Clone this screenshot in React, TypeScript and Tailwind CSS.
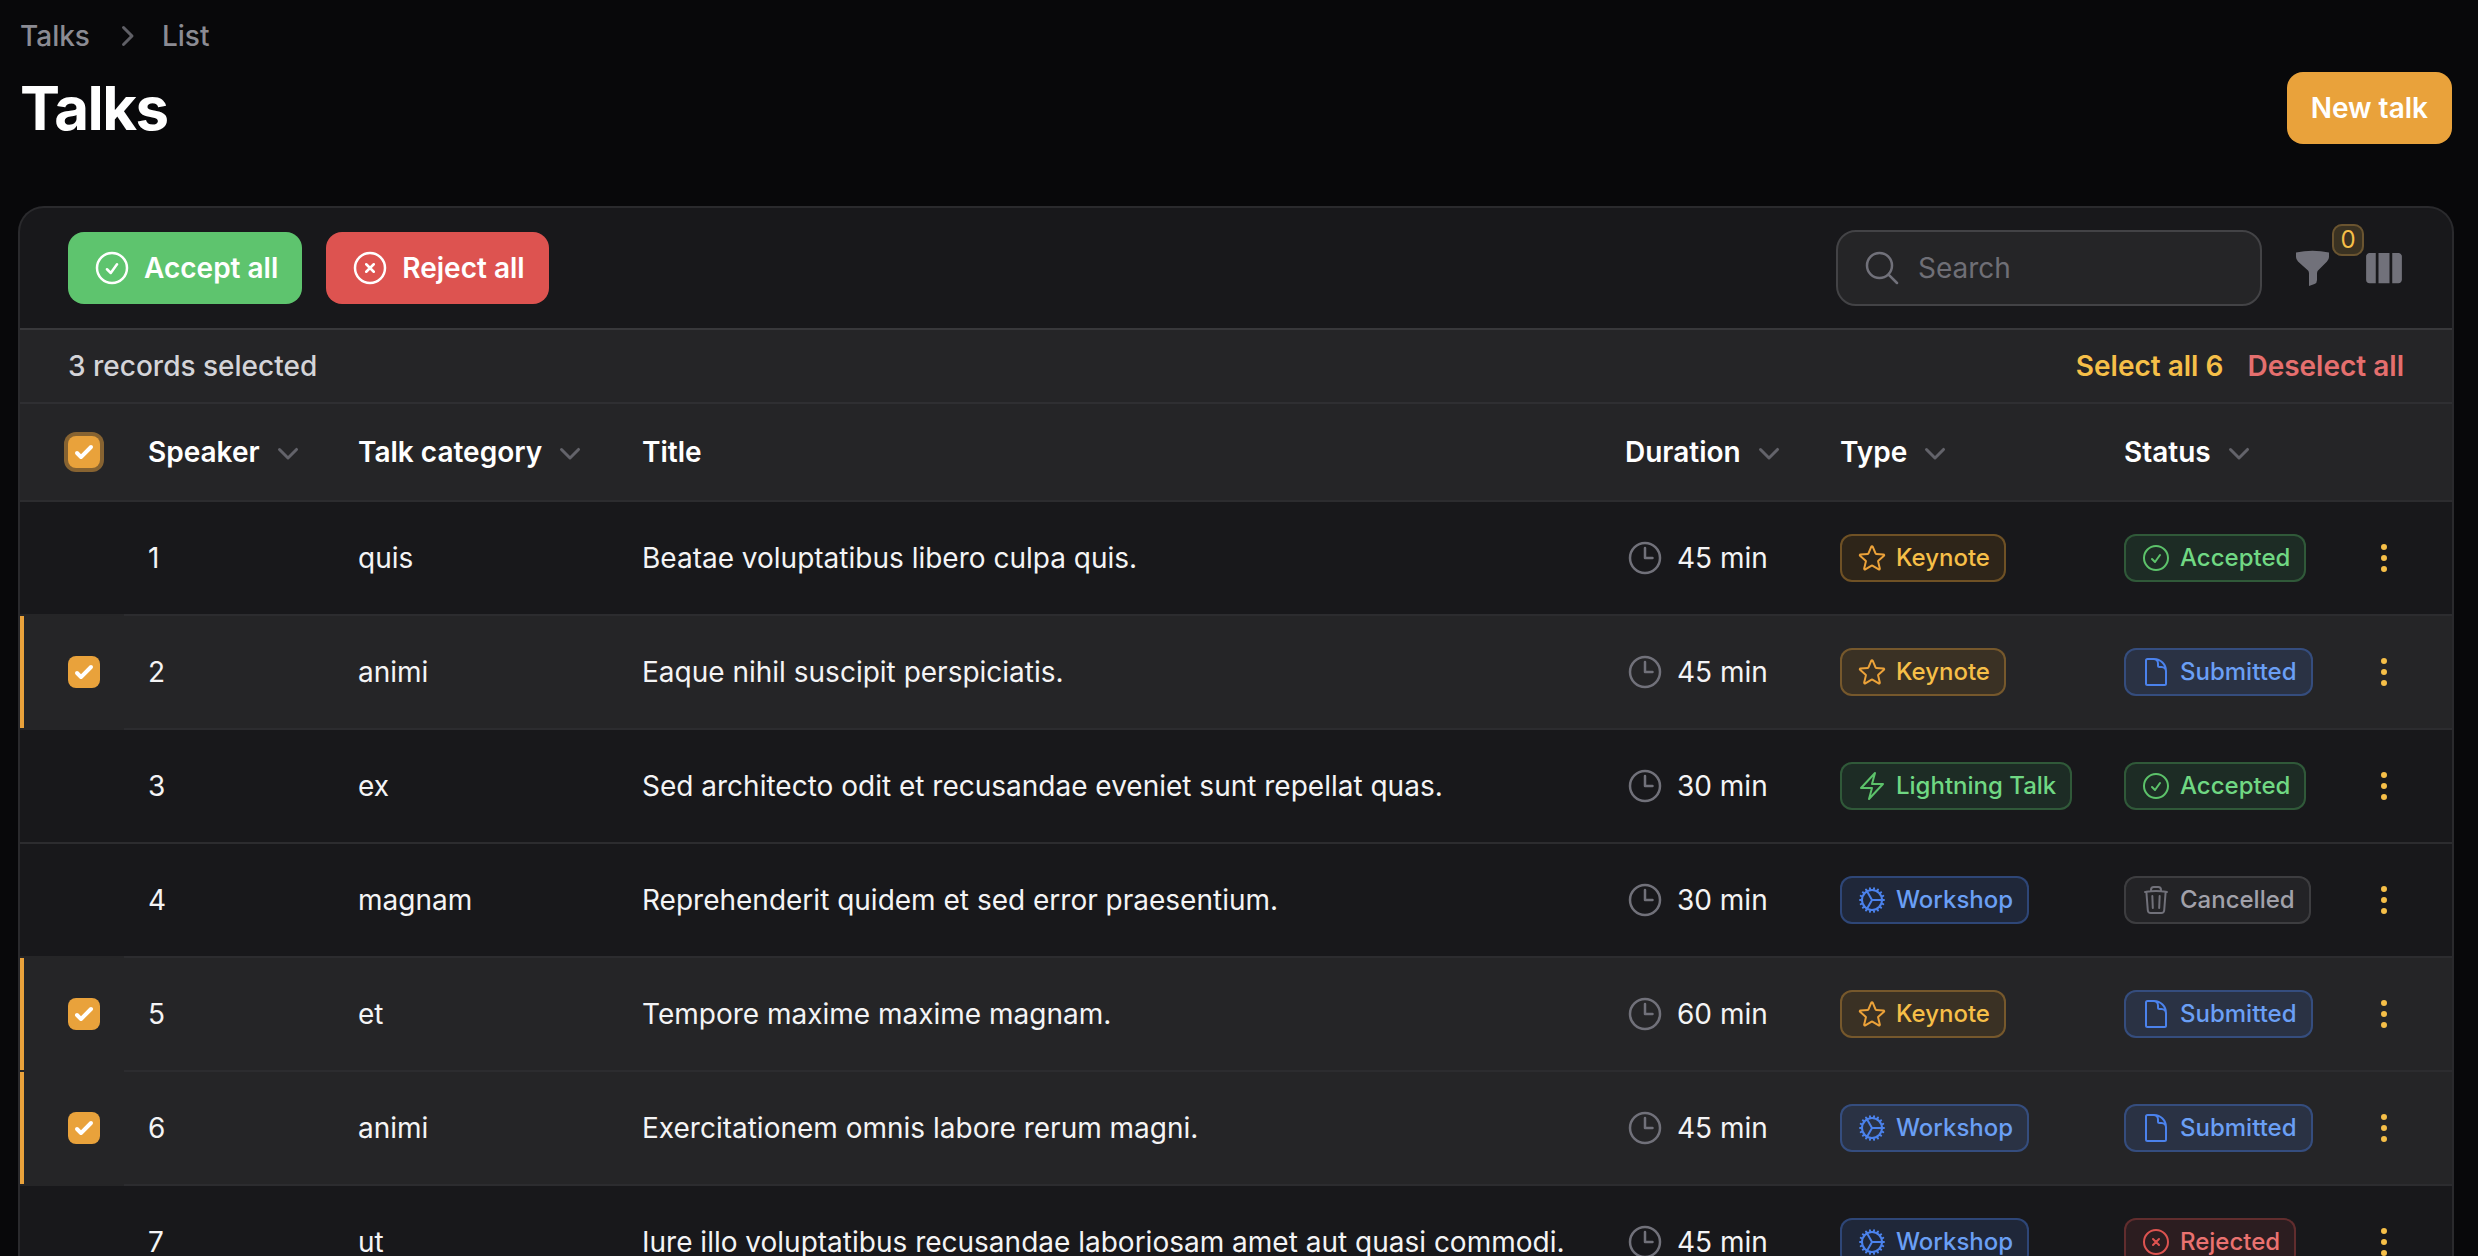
import React from "react";
import {
  HiOutlineCheckCircle,
  HiOutlineXCircle,
  HiOutlineStar,
  HiOutlineBolt,
  HiOutlineCog,
  HiOutlineDocument,
  HiOutlineTrash,
  HiOutlineClock,
  HiOutlineMagnifyingGlass,
  HiViewColumns,
  HiMiniChevronDown,
  HiMiniChevronRight,
  HiMiniEllipsisVertical,
} from "react-icons/hi2";

const GRID = "grid grid-cols-[128px_210px_284px_983px_215px_284px_228px_1fr] items-center";

type Tone = "warning" | "success" | "info" | "gray" | "danger";
const tones: Record<Tone, { box: string; icon: string }> = {
  warning: { box: "bg-[#f59e0b1a] ring-[#e9a23b59] text-[#f6bf48]", icon: "text-[#eca239]" },
  success: { box: "bg-[#4ade801a] ring-[#5cc26a4d] text-[#70d883]", icon: "text-[#5cc26a]" },
  info: { box: "bg-[#4b82ec26] ring-[#4b82ec59] text-[#6a9ff5]", icon: "text-[#4b82ec]" },
  gray: { box: "bg-[#ffffff0d] ring-[#ffffff1f] text-[#a1a1aa]", icon: "text-[#71717a]" },
  danger: { box: "bg-[#dd53501a] ring-[#dd53504d] text-[#ea7270]", icon: "text-[#dd5350]" },
};

const types: Record<string, { tone: Tone; Icon: React.ComponentType<{ className?: string }> }> = {
  Keynote: { tone: "warning", Icon: HiOutlineStar },
  "Lightning Talk": { tone: "success", Icon: HiOutlineBolt },
  Workshop: { tone: "info", Icon: HiOutlineCog },
  Accepted: { tone: "success", Icon: HiOutlineCheckCircle },
  Submitted: { tone: "info", Icon: HiOutlineDocument },
  Cancelled: { tone: "gray", Icon: HiOutlineTrash },
  Rejected: { tone: "danger", Icon: HiOutlineXCircle },
};

const rows = [
  { id: 1, cat: "quis", title: "Beatae voluptatibus libero culpa quis.", dur: "45 min", type: "Keynote", status: "Accepted", sel: false },
  { id: 2, cat: "animi", title: "Eaque nihil suscipit perspiciatis.", dur: "45 min", type: "Keynote", status: "Submitted", sel: true },
  { id: 3, cat: "ex", title: "Sed architecto odit et recusandae eveniet sunt repellat quas.", dur: "30 min", type: "Lightning Talk", status: "Accepted", sel: false },
  { id: 4, cat: "magnam", title: "Reprehenderit quidem et sed error praesentium.", dur: "30 min", type: "Workshop", status: "Cancelled", sel: false },
  { id: 5, cat: "et", title: "Tempore maxime maxime magnam.", dur: "60 min", type: "Keynote", status: "Submitted", sel: true },
  { id: 6, cat: "animi", title: "Exercitationem omnis labore rerum magni.", dur: "45 min", type: "Workshop", status: "Submitted", sel: true },
  { id: 7, cat: "ut", title: "Iure illo voluptatibus recusandae laboriosam amet aut quasi commodi.", dur: "45 min", type: "Workshop", status: "Rejected", sel: false },
];

function Badge({ label }: { label: string }) {
  const { tone, Icon } = types[label];
  const t = tones[tone];
  return (
    <span className={`flex h-12 w-fit items-center gap-2 rounded-xl px-4 text-[24px] leading-8 font-medium ring-2 ring-inset ${t.box}`}>
      <Icon className={`h-8 w-8 shrink-0 ${t.icon}`} />
      {label}
    </span>
  );
}

function Checkbox({ ring }: { ring?: boolean }) {
  return (
    <span className={`flex h-8 w-8 items-center justify-center rounded-lg bg-[#e9a23b] ${ring ? "ring-4 ring-[#e9a23b80]" : ""}`}>
      <svg viewBox="0 0 16 16" className="h-8 w-8" fill="#fff">
        <path d="M12.207 4.793a1 1 0 010 1.414l-5 5a1 1 0 01-1.414 0l-2-2a1 1 0 011.414-1.414L6.5 9.086l4.293-4.293a1 1 0 011.414 0z" />
      </svg>
    </span>
  );
}

function Head({ label, sort = true }: { label: string; sort?: boolean }) {
  return (
    <div className="flex items-center gap-2 text-[28px] leading-10 font-semibold text-white">
      {label}
      {sort && <HiMiniChevronDown className="h-10 w-10 text-[#63636a]" />}
    </div>
  );
}

export default function App() {
  return (
    <div className="h-[1256px] overflow-hidden bg-[#08080a] pt-4 pr-[26px] pl-5 font-['Inter',sans-serif] text-white">
      <nav className="flex h-10 items-center gap-4 text-[28px] leading-10 font-medium text-[#8b8b93]">
        <span>Talks</span>
        <HiMiniChevronRight className="h-10 w-10 text-[#5f5f66]" />
        <span>List</span>
      </nav>
      <header className="mt-4 flex h-[72px] items-center justify-between">
        <h1 className="text-[60px] leading-[72px] font-bold tracking-tight">Talks</h1>
        <button className="flex h-[72px] items-center rounded-2xl bg-[#e9a23b] px-6 text-[28px] font-semibold text-white">New talk</button>
      </header>

      <section className="mt-16 overflow-visible rounded-3xl bg-[#18181b] ring-2 ring-[#2a2a2d]">
        <div className="flex h-[120px] items-center justify-between pr-12 pl-12">
          <div className="flex gap-6">
            <button className="flex h-[72px] items-center gap-3 rounded-2xl bg-[#5ec46e] px-6 text-[28px] font-semibold text-white">
              <HiOutlineCheckCircle className="h-10 w-10" />
              Accept all
            </button>
            <button className="flex h-[72px] items-center gap-3 rounded-2xl bg-[#dd5350] px-6 text-[28px] font-semibold text-white">
              <HiOutlineXCircle className="h-10 w-10" />
              Reject all
            </button>
          </div>
          <div className="flex items-center">
            <div className="flex h-[76px] w-[426px] items-center gap-4 rounded-[20px] border-2 border-[#434346] bg-[#252527] pl-6 text-[28px] text-[#6f6f76]">
              <HiOutlineMagnifyingGlass className="h-10 w-10 text-[#71717a]" />
              Search
            </div>
            <div className="relative ml-[30px] flex h-10 w-10 items-center justify-center">
              <svg viewBox="0 0 33 36" className="h-9 w-[33px] text-[#71717a]" fill="currentColor">
                <path d="M0 2.5Q16.5-.8 33 2.5V7Q33 9.5 31 11.5L22 20.5Q21 21.5 21 23.5V30Q21 33 18.5 34L13 36V23.5Q13 21.5 12 20.5L2 11.5Q0 9.5 0 7Z" />
              </svg>
              <span className="absolute -top-6 left-10 flex h-8 w-8 items-center justify-center rounded-[10px] bg-[#3a3222] text-[24px] text-[#f6bf48] ring-2 ring-inset ring-[#6a5430]">0</span>
            </div>
            <div className="-mr-[2px] ml-[30px] flex h-11 w-11 items-center justify-center">
              <HiViewColumns className="h-11 w-11 text-[#71717a]" />
            </div>
          </div>
        </div>

        <div className="flex h-[74px] items-center justify-between border-t-2 border-[#38383b] bg-[#252527] px-12 text-[28px]">
          <span className="font-medium text-[#d4d4d8]">3 records selected</span>
          <div className="flex gap-6 font-semibold">
            <span className="text-[#f6bf48]">Select all 6</span>
            <span className="text-[#e56f6e]">Deselect all</span>
          </div>
        </div>

        <div className={`${GRID} h-[98px] border-t-2 border-[#2f2f32] bg-[#252527]`}>
          <div className="pl-12">
            <Checkbox ring />
          </div>
          <Head label="Speaker" />
          <Head label="Talk category" />
          <Head label="Title" sort={false} />
          <Head label="Duration" />
          <Head label="Type" />
          <Head label="Status" />
          <div />
        </div>

        {rows.map((r, i) => (
          <div key={r.id} className={`${GRID} relative h-[114px] border-t-2 border-[#2c2c2f] text-[28px] leading-10 text-[#f4f4f5] ${r.sel ? "bg-[#252527]" : ""}`}>
            <div className="flex items-center pl-12">
              {(r.sel || (i > 0 && rows[i - 1].sel)) && <span className="absolute -top-[2px] left-0 h-[2px] w-[104px] bg-[#252527]" />}
              {r.sel && <span className="absolute top-0 bottom-0 left-0 w-1 bg-[#e9a23b]" />}
              {r.sel && <Checkbox />}
            </div>
            <div>{r.id}</div>
            <div>{r.cat}</div>
            <div>{r.title}</div>
            <div className="flex items-center gap-3">
              <HiOutlineClock className="h-10 w-10 text-[#71717a]" />
              {r.dur}
            </div>
            <div><Badge label={r.type} /></div>
            <div><Badge label={r.status} /></div>
            <div className="flex justify-start pl-[12px]">
              <HiMiniEllipsisVertical className="h-10 w-10 text-[#f6bf48]" />
            </div>
          </div>
        ))}
      </section>
    </div>
  );
}
